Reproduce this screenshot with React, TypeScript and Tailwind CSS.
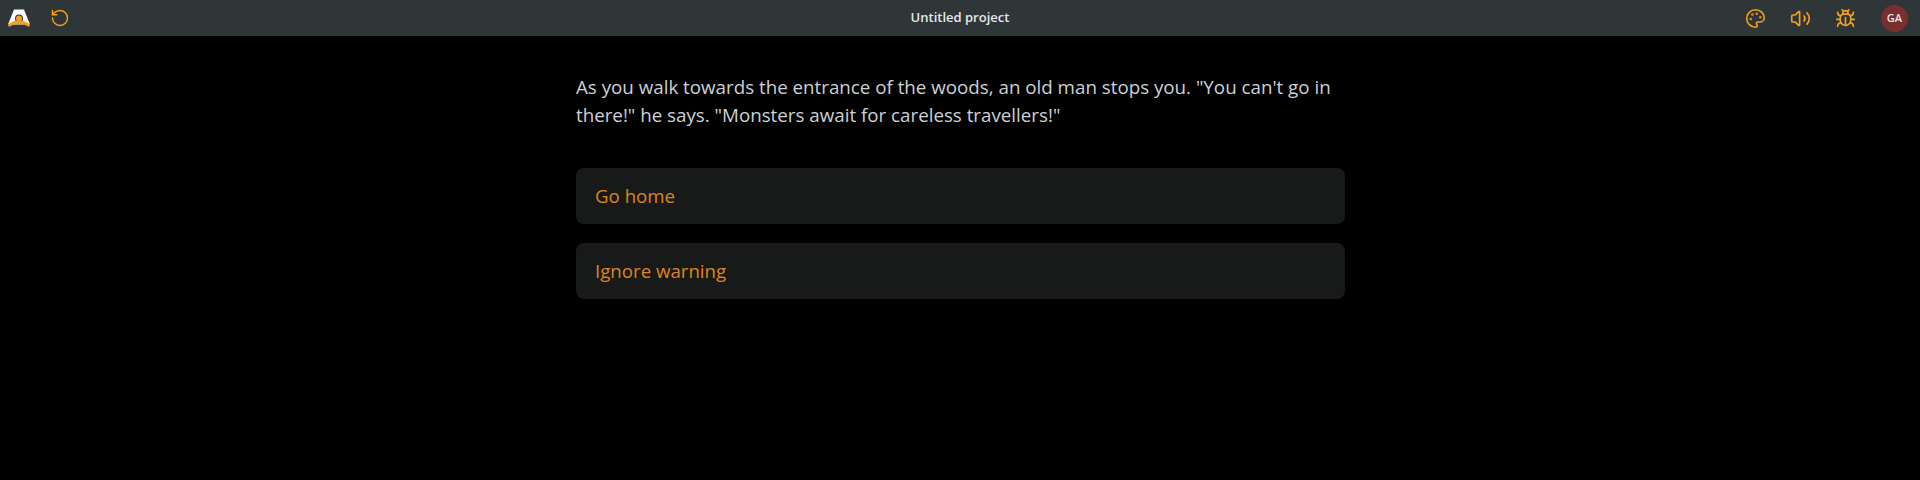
import { RotateCcw, Palette, Volume2, Bug } from 'lucide-react'

function Logo() {
  return (
    <svg width="22" height="18" viewBox="0 0 22 18" className="block">
      <path fillRule="evenodd" d="M6 0.500h10l6 15H0zM11 5.500a4 4 0 1 0 0 8a4 4 0 1 0 0-8z" fill="#fff" />
      <circle cx="11" cy="9.500" r="3" fill="#f59e1c" />
      <path d="M0 15.500c3-2.500 7-4 11-4s8 1.500 11 4l-1 2.500c-3-2-6.500-3-10-3s-7 1-10 3z" fill="#f59e1c" />
    </svg>
  )
}

function Choice({ label }: { label: string }) {
  return (
    <button className="flex h-14 w-full items-center rounded-lg bg-[#181a1a] px-[19px] text-left text-[18.67px] text-[#de8519]">
      {label}
    </button>
  )
}

export default function App() {
  return (
    <div className="min-h-[480px] bg-black font-['Open_Sans',sans-serif]">
      <header className="relative flex h-9 items-center justify-between bg-[#2e3638] text-[#f59e1c]">
        <div className="flex items-center gap-5 pl-2">
          <Logo />
          <RotateCcw size={20} strokeWidth={1.75} />
        </div>
        <div className="absolute inset-x-0 text-center text-[13px] font-semibold text-[#e5e7eb]">Untitled project</div>
        <div className="flex items-center pr-3">
          <Palette size={21} strokeWidth={1.9} />
          <Volume2 size={21} strokeWidth={1.9} className="ml-[24px]" />
          <Bug size={21} strokeWidth={1.9} className="ml-[24px]" />
          <div className="ml-[25px] flex h-[27px] w-[27px] items-center justify-center rounded-full bg-[#7a2f2f] text-[11px] font-semibold text-[#e5e7eb]">
            GA
          </div>
        </div>
      </header>
      <main className="ml-[576px] w-[769px] pt-[37px]">
        <p className="text-[18.75px] leading-7 text-[#cdd0d4]">
          As you walk towards the entrance of the woods, an old man stops you. "You can't go in there!" he says. "Monsters await for careless travellers!"
        </p>
        <div className="mt-[39px] flex flex-col gap-[19px]">
          <Choice label="Go home" />
          <Choice label="Ignore warning" />
        </div>
      </main>
    </div>
  )
}
